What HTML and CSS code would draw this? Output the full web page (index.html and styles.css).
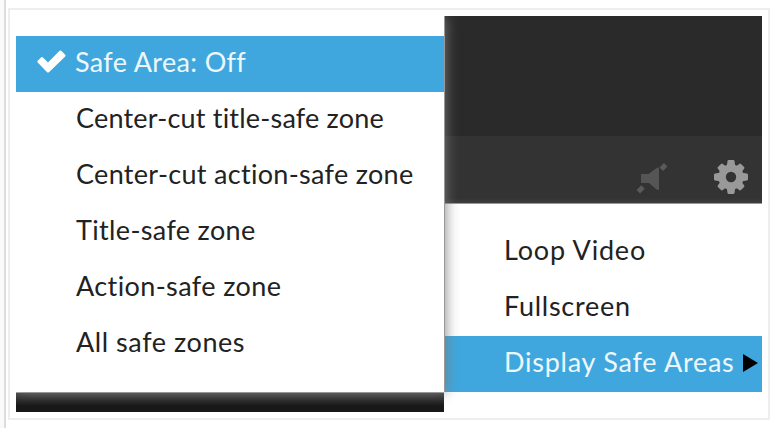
FILE: index.html
```html
<!DOCTYPE html>
<html lang="en">
<head>
<meta charset="utf-8">
<title>Safe area menu</title>
<link rel="stylesheet" href="styles.css">
</head>
<body>
<main class="page">
  <div class="frame">
    <section class="left">
      <ul class="submenu">
        <li class="row active"><svg class="check" viewBox="0 0 29 23"><path d="M.7 12.500Q0 11.500.7 10.700L4 7.400Q5 6.700 6 7.500L11 12.400 22.300 1Q23.400 0 24.500 1L28.200 4.700Q29 5.500 28.200 6.500L12.200 22Q11 23 9.900 22z" fill="#fff"/></svg><span class="t-off">Safe Area: Off</span></li>
        <li class="row"><span class="t-cct">Center-cut title-safe zone</span></li>
        <li class="row"><span class="t-cca">Center-cut action-safe zone</span></li>
        <li class="row"><span class="t-title">Title-safe zone</span></li>
        <li class="row"><span class="t-action">Action-safe zone</span></li>
        <li class="row"><span class="t-all">All safe zones</span></li>
      </ul>
      <div class="strip"></div>
    </section>
    <section class="right">
      <div class="video"></div>
      <div class="controls">
        <svg class="mute" viewBox="0 0 32 32"><path d="M5 12h7.500l7.500-5.500Q23 4.500 23 7v20q0 2-3 0l-7-6H5z" fill="#555"/><path d="M3 30L9 24" stroke="#333" stroke-width="9"/><path d="M25.300 7.200L29.700 2.800M2.300 29.700L7 25" stroke="#5a5a5a" stroke-width="5"/></svg>
        <svg class="gear" viewBox="-17 -17 34 34"><g fill="#999"><circle r="12.700"/><g id="teeth"><path d="M-4.200-11l.7-5q.2-1 1.200-1h4.600q1 0 1.200 1l.7 5v22l-.7 5q-.2 1-1.200 1h-4.600q-1 0-1.200-1l-.7-5zM-11-4.200l-5 .7q-1 .2-1 1.200v4.600q0 1 1 1.200l5 .7h22l5-.7q1-.2 1-1.200v-4.600q0-1-1-1.200l-5-.7z"/></g><use href="#teeth" transform="rotate(45) scale(.96)"/></g><circle r="5.200" fill="#333"/></svg>
      </div>
      <ul class="settings">
        <li class="row"><span class="t-loop">Loop Video</span></li>
        <li class="row"><span class="t-full">Fullscreen</span></li>
        <li class="row active"><span class="t-display">Display Safe Areas</span><svg class="arrow" viewBox="0 0 15 18"><path d="M0 0l15 9L0 18z"/></svg></li>
      </ul>
    </section>
  </div>
</main>
</body>
</html>
```
FILE: styles.css
```css
* { box-sizing: border-box; }
body { margin: 0; background: #fafafa; color: #222; font: 27px/56px Lato, sans-serif; overflow: hidden; }
ul { margin: 0; padding: 0; list-style: none; }
svg { display: block; overflow: visible; flex: none; }
.page { height: 428px; margin-left: 4px; padding: 8px 10px 8px 2px; border-left: 2px solid #ddd; background: #fff; }
.frame { display: flex; width: 762px; height: 412px; padding: 6px; border: 2px solid #eee; }
.left { width: 428px; display: flex; flex-direction: column; position: relative; z-index: 1; }
.submenu { height: 376px; padding-top: 20px; background: #fff; box-shadow: 1px 0 0 #999, 2px 0 12px rgba(125, 125, 125, .85); clip-path: inset(0 -16px -14px 0); }
.row { display: flex; align-items: center; height: 56px; padding-left: 60px; white-space: nowrap; }
.row span { position: relative; top: -2px; }
.active { background: #3fa7dd; color: #edf7fc; }
.check { width: 29px; height: 23px; margin: -6px 10px 0 -40px; position: relative; left: 1px; }
.strip { height: 20px; background: linear-gradient(#aaa 0, #aaa 1px, #464646 1px, #282828 9px, #181818 14px); }
.right { width: 318px; }
.video { height: 120px; background: #2a2a2a; }
.controls { display: flex; height: 68px; padding: 10px 14px 0 0; justify-content: flex-end; gap: 46px; background: linear-gradient(#333 62px, #3e3e3e 67px, #999 67px); }
.mute { width: 32px; height: 32px; margin-top: 16px; }
.gear { width: 34px; height: 34px; margin-top: 14px; }
.settings { padding-top: 20px; }
.arrow { width: 15px; height: 18px; margin: -3px 0 0 8px; }
.t-off { letter-spacing: .35px; }
.t-cct { letter-spacing: .2px; }
.t-cca { letter-spacing: .31px; }
.t-title { letter-spacing: .35px; }
.t-action { letter-spacing: .39px; }
.t-all { letter-spacing: .56px; }
.t-loop { letter-spacing: .8px; }
.t-full { letter-spacing: .72px; }
.t-display { letter-spacing: .75px; }
```
